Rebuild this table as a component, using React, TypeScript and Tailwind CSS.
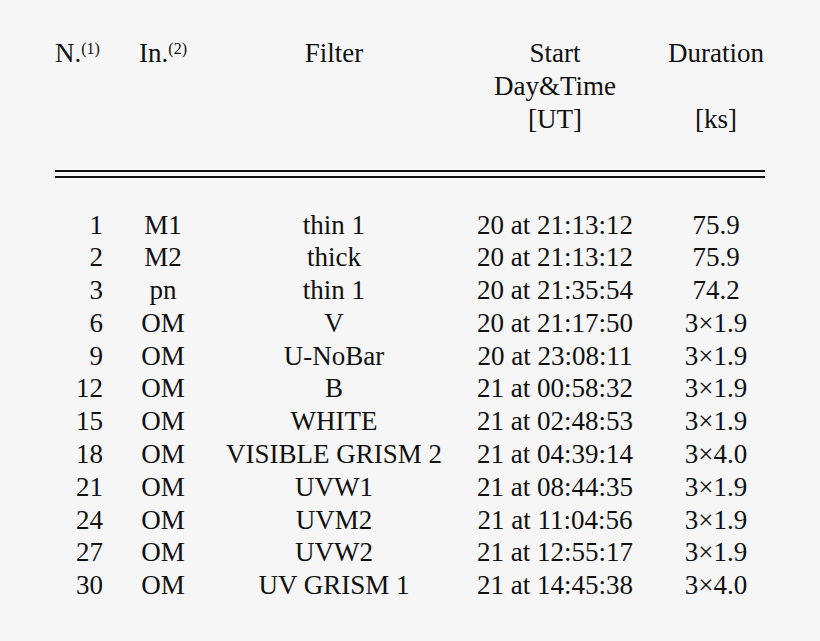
const rows: [string, string, string, string, string][] = [
  ["1", "M1", "thin 1", "20 at 21:13:12", "75.9"],
  ["2", "M2", "thick", "20 at 21:13:12", "75.9"],
  ["3", "pn", "thin 1", "20 at 21:35:54", "74.2"],
  ["6", "OM", "V", "20 at 21:17:50", "3\u00d71.9"],
  ["9", "OM", "U-NoBar", "20 at 23:08:11", "3\u00d71.9"],
  ["12", "OM", "B", "21 at 00:58:32", "3\u00d71.9"],
  ["15", "OM", "WHITE", "21 at 02:48:53", "3\u00d71.9"],
  ["18", "OM", "VISIBLE GRISM 2", "21 at 04:39:14", "3\u00d74.0"],
  ["21", "OM", "UVW1", "21 at 08:44:35", "3\u00d71.9"],
  ["24", "OM", "UVM2", "21 at 11:04:56", "3\u00d71.9"],
  ["27", "OM", "UVW2", "21 at 12:55:17", "3\u00d71.9"],
  ["30", "OM", "UV GRISM 1", "21 at 14:45:38", "3\u00d74.0"],
];

const cols = "grid grid-cols-[48px_120px_222px_220px_102px]";

function Sup({ children }: { children: string }) {
  return <span className="text-[16px] leading-none align-[8px]">{children}</span>;
}

export default function App() {
  return (
    <div className="min-h-screen bg-[#f6f6f6] text-[#111] pl-[55px] pt-[37px] text-[27px] font-['Liberation_Serif']">
      <div className="w-[710px]">
        {/* header */}
        <div className={`${cols} leading-[33px] whitespace-nowrap`}>
          <div className="text-left">
            N.<Sup>(1)</Sup>
          </div>
          <div className="text-center">
            In.<Sup>(2)</Sup>
          </div>
          <div className="text-center">Filter</div>
          <div className="text-center flex flex-col">
            <span>Start</span>
            <span>Day&amp;Time</span>
            <span>[UT]</span>
          </div>
          <div className="text-center flex flex-col">
            <span>Duration</span>
            <span>&nbsp;</span>
            <span>[ks]</span>
          </div>
        </div>

        {/* double rule */}
        <div className="mt-[34px] h-[7.5px] border-t-2 border-b-2 border-[#111]" />

        {/* body */}
        <div className="mt-[31px] leading-[32.8px] whitespace-nowrap">
          {rows.map((r) => (
            <div key={r[0]} className={cols}>
              <div className="text-right">{r[0]}</div>
              <div className="text-center">{r[1]}</div>
              <div className="text-center">{r[2]}</div>
              <div className="text-center">{r[3]}</div>
              <div className="text-center">{r[4]}</div>
            </div>
          ))}
        </div>
      </div>
    </div>
  );
}
